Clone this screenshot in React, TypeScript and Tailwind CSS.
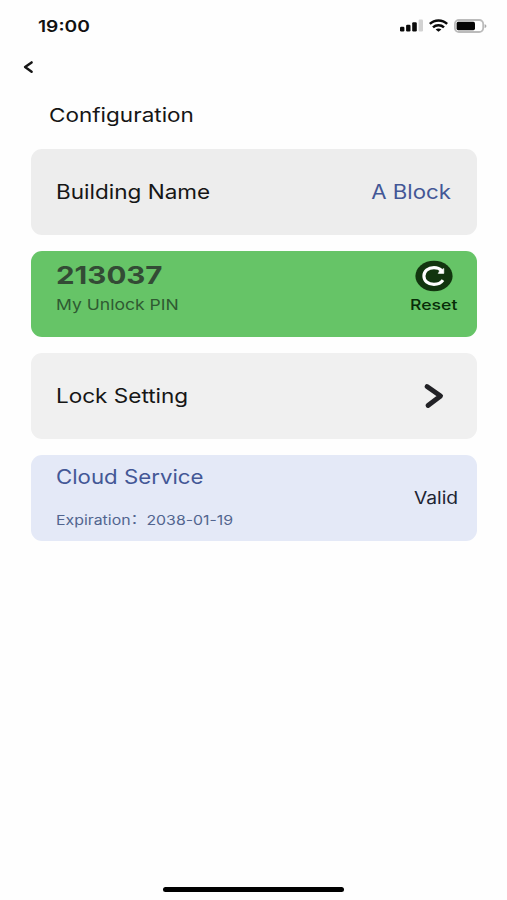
import React from 'react';

const StatusBar: React.FC = () => (
    <div className="h-[52px] pl-[38px] pr-5 flex items-center justify-between">
        <span className="text-[16px] font-semibold text-[#111] origin-left scale-x-[1.2] whitespace-nowrap">19:00</span>
        <div className="flex items-center">
            {/* Signal */}
            <svg width="24" height="14" viewBox="0 0 24 14" fill="#0a0a0a">
                <rect x="0" y="7.8" width="4.4" height="4.6" rx="1.2" />
                <rect x="6.1" y="5.8" width="4.4" height="6.6" rx="1.2" />
                <rect x="12.2" y="3.3" width="4.6" height="9.1" rx="1.2" />
                <rect x="18.6" y="0.6" width="4.4" height="11.8" rx="1.2" fill="#d2d2d2" />
            </svg>
            {/* Wifi */}
            <svg className="ml-[5px]" width="19" height="14" viewBox="0 0 19 14" fill="none" stroke="#0a0a0a" strokeWidth="2.5">
                <path d="M0.8 4.9C5.6 0.2 13.4 0.2 18.2 4.9" />
                <path d="M4 8.3C7 5.5 12 5.5 15 8.3" />
                <path d="M9.5 12.7L6.6 10.4C8.2 9.1 10.8 9.1 12.4 10.4Z" fill="#0a0a0a" stroke="none" />
            </svg>
            {/* Battery */}
            <svg className="ml-[6px]" width="33" height="14" viewBox="0 0 33 14">
                <rect x="0.9" y="1" width="28.3" height="12" rx="4" fill="#fff" stroke="#bbb" strokeWidth="1.8" />
                <rect x="2.6" y="2.8" width="18.4" height="8.4" rx="1.6" fill="#050505" />
                <path d="M30.6 5.2C33 5.5 33 8.7 30.6 9Z" fill="#aaa" />
            </svg>
        </div>
    </div>
);

const ConfigurationPage: React.FC = () => {
    return (
        <div className="w-[507px] h-[900px] bg-[#fefefe] flex flex-col overflow-hidden font-['Inter','Noto_Sans_CJK_SC',sans-serif] text-[#161616]">
            <StatusBar />

            <button className="h-[30px] pl-[22px] flex items-center">
                <svg width="13" height="14" viewBox="0 0 13 14" fill="none" stroke="#161616" strokeWidth="2.5" strokeLinecap="round" strokeLinejoin="round">
                    <path d="M9.6 2.4L3.1 7L9.6 11.7" />
                </svg>
            </button>

            <h1 className="h-[67px] pt-[2px] pl-[49px] flex items-center text-[19px]">
                <span className="origin-left scale-x-[1.185] whitespace-nowrap">Configuration</span>
            </h1>

            <main className="pl-[31px] pr-[30px] flex flex-col gap-4">
                <section className="h-[86px] rounded-[11px] bg-[#ededed] pl-[25px] pr-[26px] pt-px flex items-center justify-between text-[19.5px]">
                    <span className="origin-left scale-x-[1.155] whitespace-nowrap">Building Name</span>
                    <span className="origin-right scale-x-[1.14] whitespace-nowrap text-[#435796]">A Block</span>
                </section>

                <section className="h-[86px] rounded-[11px] bg-[#66c467] pl-[25px] pr-[19px] flex justify-between">
                    <div className="pt-[9px]">
                        <p className="h-[33px] leading-8 text-[24px] font-bold text-[#334b35] origin-left scale-x-[1.23] whitespace-nowrap">213037</p>
                        <p className="h-6 leading-6 text-[15px] text-[#2f5a32] origin-left scale-x-[1.17] whitespace-nowrap">My Unlock PIN</p>
                    </div>
                    <button className="w-12 pt-[9px] flex flex-col items-center">
                        <svg width="38" height="32" viewBox="0 0 38 32">
                            <ellipse cx="19" cy="16" rx="18.6" ry="15.3" fill="#12350f" />
                            <path d="M26.6 10.6C24.8 8.6 22.4 7.6 19 7.6C13 7.6 8.9 11.2 8.9 16C8.9 20.8 13 24.4 19 24.4C22.8 24.4 26.2 22.8 28 20.2" fill="none" stroke="#fff" strokeWidth="3.1" />
                            <path d="M24.6 11.2L28.8 8.4V13.4H23.2Z" fill="#fff" stroke="#fff" strokeWidth="0.6" />
                        </svg>
                        <span className="mt-px h-6 leading-6 text-[14.7px] font-medium text-[#082c08] scale-x-[1.2] whitespace-nowrap">Reset</span>
                    </button>
                </section>

                <section className="h-[86px] rounded-[11px] bg-[#f0f0f0] pl-[25px] pr-[31px] pt-px flex items-center justify-between text-[19.5px]">
                    <span className="pt-px origin-left scale-x-[1.155] whitespace-nowrap">Lock Setting</span>
                    <svg width="24" height="28" viewBox="0 0 24 28" fill="none" stroke="#222226" strokeWidth="4.8" strokeLinecap="round" strokeLinejoin="round">
                        <path d="M5 3.5L18.6 13L6 22.5" />
                    </svg>
                </section>

                <section className="h-[86px] rounded-[11px] bg-[#e4e9f7] pl-[25px] pr-[19px] flex items-center justify-between">
                    <div className="h-full pt-[6px]">
                        <p className="h-8 leading-8 text-[19.5px] text-[#435796] origin-left scale-x-[1.14] whitespace-nowrap">Cloud Service</p>
                        <p className="mt-[17px] h-5 leading-5 text-[13px] text-[#52658f] origin-left scale-x-[1.22] whitespace-nowrap">
                            Expiration<span className="relative -top-[2px]">：</span>2038-01-19
                        </p>
                    </div>
                    <span className="pt-[2px] text-[17px] text-[#202433] origin-right scale-x-[1.13] whitespace-nowrap">Valid</span>
                </section>
            </main>

            {/* Home indicator */}
            <div className="mt-auto mb-[8px] self-center w-[181px] h-[5px] rounded-full bg-black" />
        </div>
    );
};

export default ConfigurationPage;
